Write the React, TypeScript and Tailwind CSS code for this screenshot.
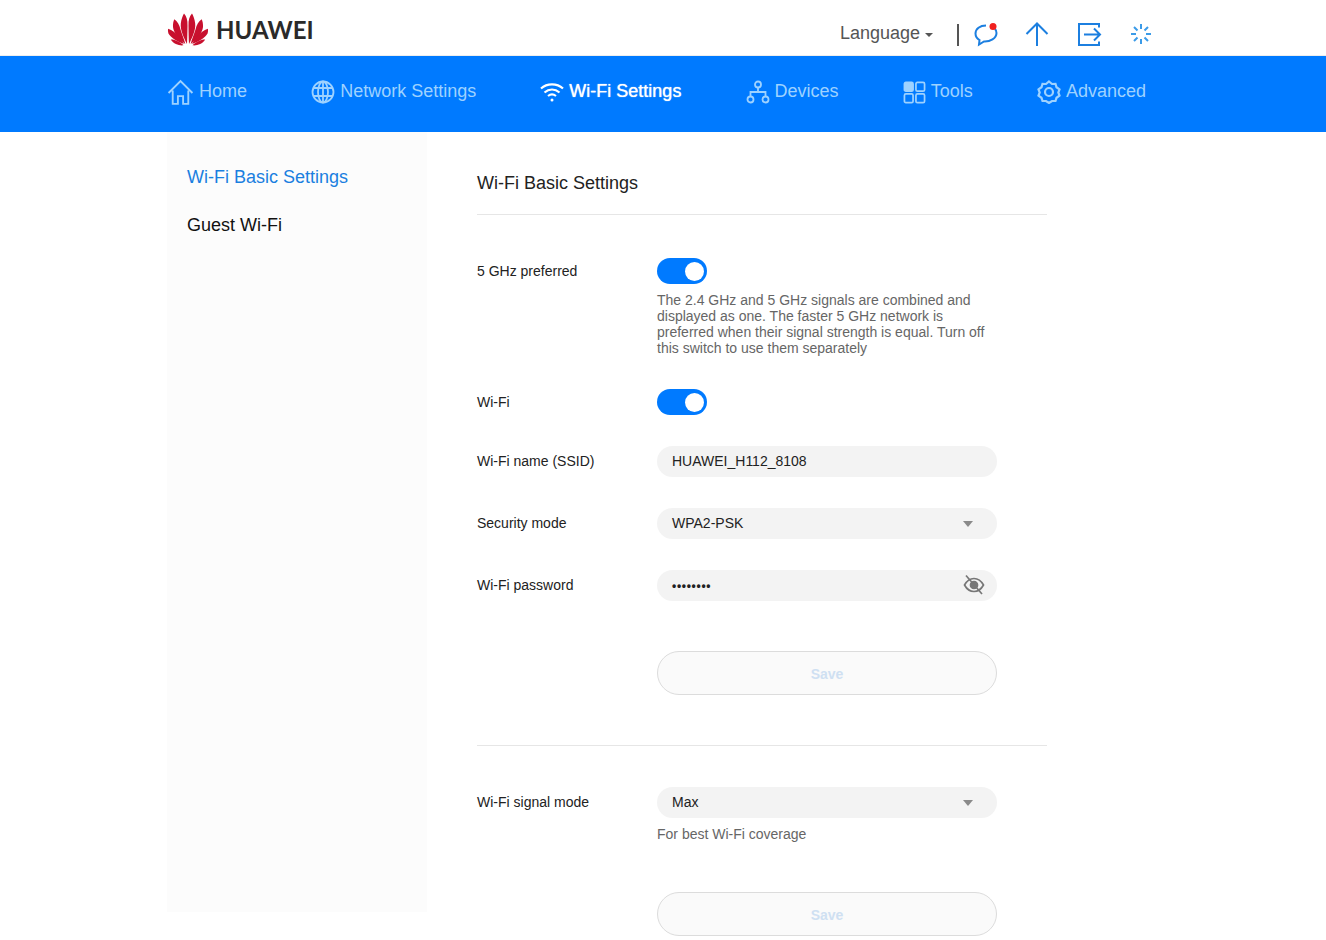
import React from "react";

const font = "font-['Liberation_Sans',Arial,sans-serif]";

const Logo = () => (
    <svg width="42" height="33" viewBox="0 0 42 33" fill="#c8102e">
        <path d="M20 31 C16.500 24 13.200 17 13.800 10.500 C14.200 6.500 15.800 2.500 17 0.500 C19.500 3 20.700 7 20.500 13 C20.400 19 20.300 26 20 31Z" />
        <path d="M22 31 C25.500 24 28.800 17 28.200 10.500 C27.800 6.500 26.200 2.500 25 0.500 C22.500 3 21.300 7 21.500 13 C21.600 19 21.700 26 22 31Z" />
        <path d="M18.300 31 C12.500 26.500 6.500 20 6 14 C5.800 11 6.500 8 7.300 6.300 C10.300 8.300 12.300 11.500 13.500 16.500 C15 21.500 17.300 26.500 18.300 31Z" />
        <path d="M23.700 31 C29.500 26.500 35.500 20 36 14 C36.200 11 35.500 8 34.700 6.300 C31.700 8.300 29.700 11.500 28.500 16.500 C27 21.500 24.700 26.500 23.700 31Z" />
        <path d="M16.800 31 C10.500 28.500 3.500 24.800 1.500 20.500 C0.900 18.800 0.800 17.200 1.200 15.800 C5 17 8.800 19.800 11.800 23.300 C13.800 25.700 15.800 28.500 16.800 31Z" />
        <path d="M25.200 31 C31.500 28.500 38.500 24.800 40.500 20.500 C41.100 18.800 41.200 17.200 40.800 15.800 C37 17 33.200 19.800 30.200 23.300 C28.200 25.700 26.200 28.500 25.200 31Z" />
        <path d="M16.500 32.300 C12 32.800 6.800 31.200 3.800 26.500 C8 26.300 13 28.800 16.500 32.300Z" />
        <path d="M25.500 32.300 C30 32.800 35.200 31.200 38.200 26.500 C34 26.300 29 28.800 25.500 32.300Z" />
    </svg>
);

const Language = () => (
    <div className="flex items-center text-[18px] text-[#555]">
        Language
        <span className="ml-[5px] mt-[2px] border-x-[4px] border-t-[4px] border-x-transparent border-t-[#555]" />
    </div>
);

const TopIcons = () => (
    <div className="flex items-center">
        <div className="w-[2px] h-[22px] bg-[#555] mr-[14px] mt-[2px]" />
        <svg className="mr-[25px]" width="26" height="26" viewBox="0 0 26 26" fill="none" stroke="#1c7fe0" strokeWidth="2">
            <path d="M13 4.500 C7 4.500 2.500 7.800 2.500 12.500 C2.500 15.500 4 17.500 6.500 19 L6 23.500 L11 20.500 C17 20.800 23.500 17.500 23.500 12 C23.500 10.500 23 9 22 8" />
            <circle cx="20" cy="5.500" r="3.500" fill="#f02020" stroke="none" />
        </svg>
        <svg className="mr-[26px]" width="26" height="26" viewBox="0 0 26 26" fill="none" stroke="#1c7fe0" strokeWidth="2">
            <path d="M13 25 V2.500 M2.500 13 L13 2.500 L23.500 13" />
        </svg>
        <svg className="mr-[27px]" width="26" height="26" viewBox="0 0 26 26" fill="none" stroke="#1c7fe0" strokeWidth="2">
            <path d="M23 6.500 V3 H3 V24 H23 V20.500 M8 13.500 H24 M18 7.500 L24 13.500 L18 19.500" />
        </svg>
        <svg width="24" height="24" viewBox="0 0 24 24" fill="none" stroke="#3b9be8" strokeWidth="2">
            <path d="M12 2 V7 M12 17 V22 M2 12 H7 M17 12 H22 M5 5 L8.500 8.500 M15.500 15.500 L19 19 M19 5 L15.500 8.500 M8.500 15.500 L5 19" />
        </svg>
    </div>
);

const navIcons: Record<string, React.ReactNode> = {
    home: <path d="M1.500 13.500 L13 2 L24.500 13.500 M5.500 11 V24 H10.500 V16.500 H15.500 V24 H20.500 V11" />,
    network: (
        <>
            <circle cx="12" cy="12" r="10.500" />
            <ellipse cx="12" cy="12" rx="5" ry="10.500" />
            <path d="M12 1.500 V22.500 M2.500 8 H21.500 M2.500 16 H21.500" />
        </>
    ),
    wifi: (
        <g fill="none" stroke="#fff" strokeWidth="2.200">
            <path d="M1 8.500 C7 3 17 3 23 8.500 M4.500 12.500 C9 8.500 15 8.500 19.500 12.500 M8 16 C10.500 14 13.500 14 16 16" />
            <circle cx="12" cy="20" r="1.500" fill="#fff" stroke="none" />
        </g>
    ),
    devices: (
        <>
            <circle cx="12" cy="4.500" r="3" />
            <circle cx="4.500" cy="19.500" r="3" />
            <circle cx="19.500" cy="19.500" r="3" />
            <path d="M12 7.500 V12 M4.500 16.500 V12 H19.500 V16.500" />
        </>
    ),
    tools: (
        <>
            <rect x="1.500" y="1.500" width="9" height="9" rx="1.500" fill="#9ed2ff" />
            <rect x="13.500" y="1.500" width="9" height="9" rx="1.500" />
            <rect x="1.500" y="13.500" width="9" height="9" rx="1.500" />
            <rect x="13.500" y="13.500" width="9" height="9" rx="1.500" />
        </>
    ),
    advanced: (
        <>
            <circle cx="12" cy="12" r="4" strokeWidth="2.200" />
            <path strokeWidth="2.200" d="M12 1.500 L15 4 L18.500 3.800 L19.500 7.200 L22.500 9.300 L21.300 12.500 L22.500 15.700 L19.500 17.800 L18.500 21 L15 21 L12 23 L9 21 L5.500 21 L4.500 17.800 L1.500 15.700 L2.700 12.500 L1.500 9.300 L4.500 7.200 L5.500 3.800 L9 4 Z" />
        </>
    ),
};

const navItems = [
    { key: "home", label: "Home", size: 27, vb: "0 0 26 26" },
    { key: "network", label: "Network Settings", size: 24, vb: "0 0 24 24" },
    { key: "wifi", label: "Wi-Fi Settings", size: 24, vb: "0 0 24 24", active: true },
    { key: "devices", label: "Devices", size: 24, vb: "0 0 24 24" },
    { key: "tools", label: "Tools", size: 23, vb: "0 0 24 24" },
    { key: "advanced", label: "Advanced", size: 24, vb: "0 0 24 24" },
];

const NavBar = () => (
    <div className="h-[76px] bg-[#007aff]">
        <div className="w-[979px] ml-[167px] h-full flex items-start justify-between pt-[22px]">
            {navItems.map((item) => (
                <div key={item.key} className={`flex items-center text-[18px] h-[26px] ${item.active ? "text-white [text-shadow:0_0_1px_#fff]" : "text-[#9ed2ff]"}`}>
                    <svg className="mt-[2px]" width={item.size} height={item.size} viewBox={item.vb} fill="none" stroke="#9ed2ff" strokeWidth="1.800">
                        {navIcons[item.key]}
                    </svg>
                    <span className="ml-[5px]">{item.label}</span>
                </div>
            ))}
        </div>
    </div>
);

const Toggle = () => (
    <div className="relative w-[50px] h-[26px] rounded-full bg-[#007aff]">
        <span className="absolute right-[3px] top-[3.5px] w-[19px] h-[19px] rounded-full bg-white" />
    </div>
);

const Caret = () => (
    <span className="border-x-[5.5px] border-t-[6px] border-x-transparent border-t-[#8a8a8a] mr-[24px]" />
);

const Field = ({ children, caret }: { children: React.ReactNode; caret?: boolean }) => (
    <div className="w-[340px] h-[31px] rounded-full bg-[#f3f3f3] flex items-center justify-between pl-[15px] text-[14px] text-[#222]">
        <span>{children}</span>
        {caret && <Caret />}
    </div>
);

const Row = ({ label, className, children }: { label: string; className: string; children: React.ReactNode }) => (
    <div className={`flex items-center ${className}`}>
        <div className="w-[180px] text-[14px] text-[#222]">{label}</div>
        {children}
    </div>
);

const SaveButton = ({ className }: { className: string }) => (
    <div className={`ml-[180px] w-[340px] h-[44px] pt-[3px] rounded-full border border-[#dcdcdc] bg-[#fafafa] flex items-center justify-center text-[14px] font-bold text-[#cfe0f2] ${className}`}>
        Save
    </div>
);

export default function App() {
    return (
        <div className={`h-[940px] overflow-hidden bg-white ${font}`}>
            <header className="h-[56px] border-b border-[#eeeeee] flex items-start">
                <div className="ml-[167px] mt-[13px] flex items-start">
                    <Logo />
                    <span className="ml-[7px] mt-[3px] text-[24px] leading-[28px] font-bold text-[#2a2a2a] font-['Lato',sans-serif]">HUAWEI</span>
                </div>
                <div className="ml-auto mr-[173px] mt-[20px] flex items-center">
                    <Language />
                    <div className="ml-[24px]">
                        <TopIcons />
                    </div>
                </div>
            </header>
            <NavBar />
            <div className="flex ml-[167px]">
                <aside className="w-[260px] h-[780px] bg-[#fcfcfc] pl-[20px] pt-[32px] text-[18px]">
                    <div className="h-[26px] leading-[26px] text-[#1a7fe0]">Wi-Fi Basic Settings</div>
                    <div className="mt-[22px] h-[26px] leading-[26px] text-[#111]">Guest Wi-Fi</div>
                </aside>
                <main className="ml-[50px] w-[570px]">
                    <h1 className="mt-[38px] h-[26px] leading-[26px] text-[18px] text-[#222]">Wi-Fi Basic Settings</h1>
                    <div className="mt-[18px] border-t border-[#e6e6e6]" />
                    <Row label="5 GHz preferred" className="mt-[43px]">
                        <Toggle />
                    </Row>
                    <p className="ml-[180px] mt-[8px] w-[340px] text-[14px] leading-[16px] text-[#666]">
                        The 2.4 GHz and 5 GHz signals are combined and displayed as one. The faster 5 GHz network is preferred when their signal strength is equal. Turn off this switch to use them separately
                    </p>
                    <Row label="Wi-Fi" className="mt-[33px]">
                        <Toggle />
                    </Row>
                    <Row label="Wi-Fi name (SSID)" className="mt-[31px]">
                        <Field>HUAWEI_H112_8108</Field>
                    </Row>
                    <Row label="Security mode" className="mt-[31px]">
                        <Field caret>WPA2-PSK</Field>
                    </Row>
                    <Row label="Wi-Fi password" className="mt-[31px]">
                        <div className="relative">
                            <Field><span className="text-[12px] font-bold tracking-[0.7px]">••••••••</span></Field>
                            <svg className="absolute right-[12px] top-[4px]" width="24" height="22" viewBox="0 0 24 22" fill="none" stroke="#777" strokeWidth="1.700">
                                <path d="M3.500 11 C6 6.500 9 4.500 13 4.500 C16.500 4.500 20 6.500 22.500 11 C20 15.500 16.500 17.500 13 17.500 C9 17.500 6 15.500 3.500 11Z" />
                                <circle cx="13" cy="11" r="3.500" fill="#777" />
                                <path d="M5 1.500 L21 20" />
                            </svg>
                        </div>
                    </Row>
                    <SaveButton className="mt-[50px]" />
                    <div className="mt-[50px] border-t border-[#e6e6e6]" />
                    <Row label="Wi-Fi signal mode" className="mt-[41px]">
                        <Field caret>Max</Field>
                    </Row>
                    <p className="ml-[180px] mt-[8px] text-[14px] leading-[16px] text-[#666]">For best Wi-Fi coverage</p>
                    <SaveButton className="mt-[50px]" />
                </main>
            </div>
        </div>
    );
}
